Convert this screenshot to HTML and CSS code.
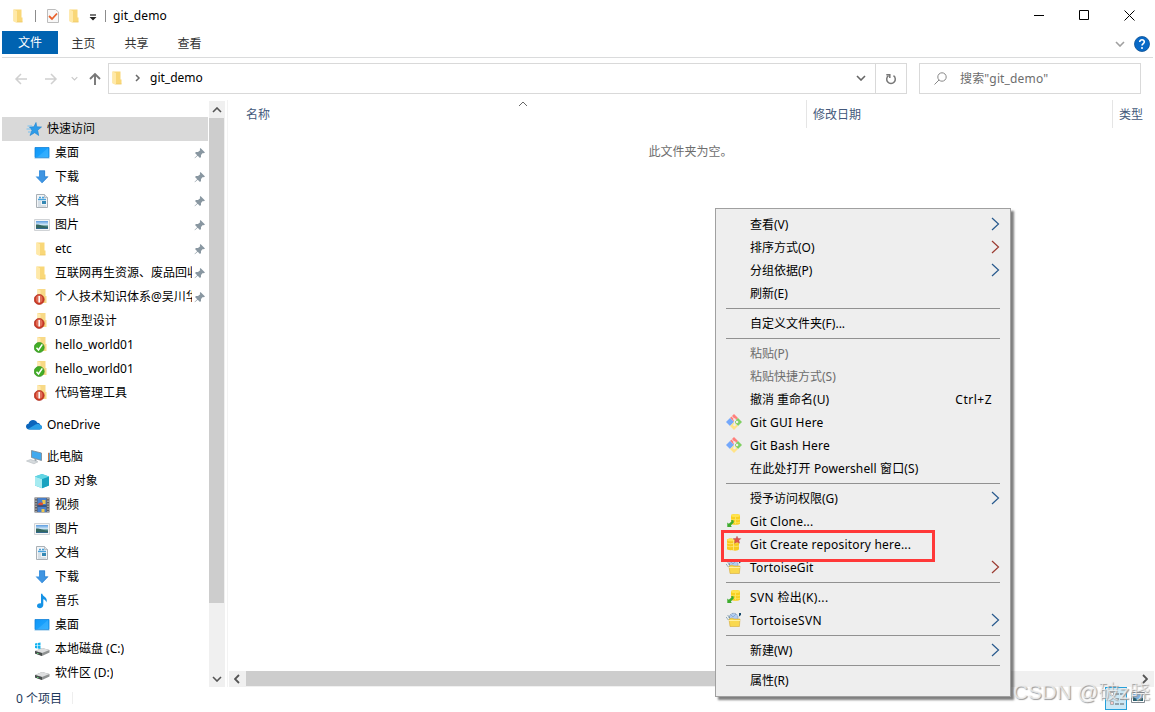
FILE: index.html
```html
<!DOCTYPE html>
<html lang="zh-CN">
<head>
<meta charset="utf-8">
<title>git_demo</title>
<link rel="stylesheet" href="styles.css">
</head>
<body>
<svg class="defs" width="0" height="0">
  <defs>
    <linearGradient id="gFold" x1="0" y1="0" x2="1" y2="1"><stop offset="0" stop-color="#ffe9a6"/><stop offset="1" stop-color="#f7cd62"/></linearGradient>
    <linearGradient id="gSky" x1="0" y1="0" x2="0" y2="1"><stop offset="0" stop-color="#5b9ce0"/><stop offset=".5" stop-color="#d8ecf8"/><stop offset=".6" stop-color="#4f8a86"/><stop offset="1" stop-color="#2d6390"/></linearGradient>
    <linearGradient id="gDesk" x1="0" y1="0" x2="1" y2="1"><stop offset="0" stop-color="#1296f6"/><stop offset=".5" stop-color="#18a0fc"/><stop offset="1" stop-color="#2bb0ff"/></linearGradient>
  </defs>
  <symbol id="folder" viewBox="0 0 16 16"><path d="M2.500 1.500h8v8h1v4.500H6l-3.500-1z" fill="#f9d778"/><path d="M2.500 1.500L6 3v12l-3.500-1.500z" fill="#ffe9a8"/><path d="M6 14h5.500" stroke="#eec764" stroke-width=".8"/></symbol>
  <symbol id="star" viewBox="0 0 16 16"><path d="M10 1.500l.8 4.300 4.700.2-3.800 3.200 1 5.300-4-2.800L4 14.500l2-5.300L3.500 6l4.400-.2z" fill="#2d9be8" stroke="#1c83d2" stroke-width=".6"/><path d="M1.500 5h4.500M.5 8h4.500M2 11h3" stroke="#75c1f2" stroke-width="1"/></symbol>
  <symbol id="desktop" viewBox="0 0 16 16"><path d="M1 2.500h14v10H1z" fill="url(#gDesk)" stroke="#1182d8" stroke-width=".8"/><path d="M3 12.500L14 3V12z" fill="#43b5ff" opacity=".5"/><path d="M.5 13.300h15" stroke="#9fcdec" stroke-width=".8"/></symbol>
  <symbol id="download" viewBox="0 0 16 16"><path d="M5 1.500h6v6h3.500L8 14.300 1.500 7.500H5z" fill="#3f95e2"/><path d="M5.300 1.800h5.400v6h3L8 13.800" fill="none" stroke="#2c80cf" stroke-width=".6"/></symbol>
  <symbol id="doc" viewBox="0 0 16 16"><path d="M2.500 1.500h8l3 3v10h-11z" fill="#f3f5f7" stroke="#a9b0b6"/><path d="M5 4.500h2M4 6.500h8M8 4.500h2" stroke="#4aa3dc" stroke-width="1.300"/><path d="M4 9h3M4 11h3M4 13h8" stroke="#a9bccb" stroke-width=".8"/><path d="M8 8h4v3H8z" fill="#3488b4"/><path d="M10.500 1.500v3h3" fill="#d8e1e8" stroke="#9aa3ab" stroke-width=".6"/></symbol>
  <symbol id="picture" viewBox="0 0 16 16"><path d="M.5 2.500h15v11H.5z" fill="#f5f5f5" stroke="#d0d3d6"/><path d="M2 4h12v8H2z" fill="url(#gSky)"/><path d="M2 7.500c3-.5 6 1.500 12 2.500v1H2z" fill="#346760"/></symbol>
  <symbol id="red" viewBox="0 0 16 16"><path d="M3.500 0h8v7h1v7h-9z" fill="#f8d986"/><path d="M3.500 0l3 1.500V12h-3z" fill="#ffeab0"/><circle cx="5.200" cy="10.500" r="5" fill="#cd3a25" stroke="#a92d1f" stroke-width=".7"/><ellipse cx="5.200" cy="10" rx="3.300" ry="3.800" fill="#df6e58"/><path d="M5.200 7v6.500" stroke="#fff" stroke-width="1.500"/></symbol>
  <symbol id="green" viewBox="0 0 16 16"><path d="M3.500 0h8v7h1v7h-9z" fill="#f8d986"/><path d="M3.500 0l3 1.500V12h-3z" fill="#ffeab0"/><circle cx="5.200" cy="10.500" r="5" fill="#42ad26" stroke="#348f20" stroke-width=".7"/><path d="M2.500 10.800l2 2.200L8.300 7.300" fill="none" stroke="#fff" stroke-width="1.500"/></symbol>
  <symbol id="cloud" viewBox="0 0 16 16"><path d="M3.500 12.500C1 12.500 0 11 0 9.500 0 8 1 7 2.500 6.800 3 4.500 5 3 7 3c2 0 3.500 1 4.200 2.800 2 0 3 1.200 3.200 2.500 1.200.3 1.600 1.200 1.600 2 0 1.300-1 2.200-2.300 2.200z" fill="#0b65bc"/><path d="M2 12l7.500-4.500c1.500-1 4-.6 5 .8 1 .4 1.500 1.200 1.500 2 0 1.300-1 2.200-2.300 2.200H3.500z" fill="#299ee6"/></symbol>
  <symbol id="pc" viewBox="0 0 16 16"><path d="M5.500 1.500l10 2.500v7.500l-10-3z" fill="#41a9ef" stroke="#7b8790" stroke-width=".8"/><path d="M9.500 10v2.500" stroke="#9ba6ae" stroke-width="2"/><path d="M.5 12l4-1.500 7.500 2.300-4 2z" fill="#d5dadd" stroke="#b5bbc0" stroke-width=".6"/></symbol>
  <symbol id="cube" viewBox="0 0 16 16"><path d="M8 1l7 2.500v9L8 15.300 1 12.500v-9z" fill="#36bdd5"/><path d="M1 3.500L8 6v9.300L1 12.500z" fill="#a6ebf1"/><path d="M8 6l7-2.500v9L8 15.300z" fill="#18a2c0"/><path d="M8 1l7 2.500L8 6 1 3.500z" fill="#62d5e3"/></symbol>
  <symbol id="video" viewBox="0 0 16 16"><path d="M.5.500h15v15H.5z" fill="#5c5c60"/><path d="M3.500 1h9v14h-9z" fill="#487fca"/><path d="M4 7.500c1-2 3-2.500 5-1.500v2c-2 1-4 .5-5-.5z" fill="#d94d36"/><path d="M8 3h3.500v4H9zM7.500 12h3v3h-3z" fill="#edc64b"/><path d="M3.500 9h9" stroke="#263340"/><path d="M2 1v14M14 1v14" stroke="#c5c5c5" stroke-width="1.300" stroke-dasharray="1.300 1.300"/></symbol>
  <symbol id="music" viewBox="0 0 16 16"><path d="M7 .8h1.300c.3 3 6.300 3.700 4 8.700-.2-2-1.700-3-3-3.300V12c0 2-1.600 3.200-3.500 3.200-1.700 0-2.800-.8-2.800-2.200C3 11.200 4.800 10 7 10.400z" fill="#1592e6"/></symbol>
  <symbol id="disk" viewBox="0 0 16 16"><path d="M1 10l7-3 7.500 2v2.500L8 15l-7-2.500z" fill="#8f9292"/><path d="M1 10l7-3 7.500 2L8 12z" fill="#dedfe0"/><path d="M1 10l7 2v3l-7-2.500z" fill="#494e4d"/><path d="M3 12.500h1.500" stroke="#62d578"/></symbol>
  <symbol id="cdisk" viewBox="0 0 16 16"><use href="#disk"/><path d="M1 2.500l2.200-.4v2.400H1zM3.800 2L6.500 1.500v3H3.800zM1 5.100h2.200v2.400L1 7.100zM3.800 5.100h2.700v3l-2.700-.5z" fill="#12b2ef"/></symbol>
  <symbol id="pin" viewBox="0 0 12 12"><path d="M6.500 1L11 5.500 9.800 6.300 8.800 6 7 8v2l-1 1L3.700 8.700.8 11.300.5 11 3.200 8.200 1 6l1-1h2l2.200-1.800L5.800 2z" fill="#8997a1"/></symbol>
  <symbol id="git" viewBox="0 0 16 16"><path d="M8 0l4 4-4 4-4-4z" fill="#ff7f7b"/><path d="M4 4l4 4-4 4-4-4z" fill="#74a8fb"/><path d="M12 4l4 4-4 4-4-4z" fill="#80cf62"/><path d="M8 8l4 4-4 4-4-4z" fill="#ffe388"/><path d="M5.500 2L11 8M8.500 5v6" stroke="#ededed" stroke-width="1" fill="none"/><circle cx="8.500" cy="5.500" r="1.200" fill="#ededed"/><circle cx="11" cy="8" r="1.300" fill="#ededed"/><circle cx="8.500" cy="11" r="1.300" fill="#ededed"/></symbol>
  <symbol id="clone" viewBox="0 0 16 16"><path d="M5 2.500c0-2 9-2 9 0v8c0 1.700-9 1.700-9 0z" fill="#f9cf20"/><ellipse cx="9.500" cy="2.500" rx="4.500" ry="1.500" fill="#ffe350"/><path d="M9.500 4v7M5 6c1 1 3 1 4.500 0 1 1 3.500 1 4.500 0M5 9c1 1 3 1 4.500 0 1 1 3.500 1 4.500 0" fill="none" stroke="#ffe766" stroke-width=".8"/><path d="M1.300 14V9.500l1.500 1.300L5.500 8.500l-.3-1.500 2.300.3.300 2.200-3 3 1 1.500z" fill="#3dac2d"/></symbol>
  <symbol id="repo" viewBox="0 0 16 16"><path d="M1 4c0-2 7-2 7 0h5v9c0 2-6 2-7 1-2 .5-5 0-5-1z" fill="#f7ca1f"/><ellipse cx="4.500" cy="4" rx="3.500" ry="1.300" fill="#ffe255"/><path d="M1 7c2 1 5 1 7 0M1 10c2 1 5 1 7 0M8 6.500c2 1 4 0 5 0M8 10c2 1 4 0 5 0M7.500 4v10" fill="none" stroke="#ffe983" stroke-width=".8"/><path d="M11 .2l1.100 2.300 2.700.1-1.900 1.900.7 2.700-2.600-1.300-2.500 1.300.5-2.700-1.800-1.900 2.700-.1z" fill="#e0554c" stroke="#b0444a" stroke-width=".4"/></symbol>
  <symbol id="tortoise" viewBox="0 0 16 16"><path d="M3.500 5c0-5 8-5 8.500 0v3H3.500z" fill="#b2cdf0" stroke="#6d86a6" stroke-width=".7" stroke-dasharray="1.500 .8"/><path d="M5 3l2 2 3-3" fill="none" stroke="#7f9fca" stroke-width=".7"/><path d="M13 1h2v2l-2 1.500z" fill="#174b6d"/><path d="M.5 5.500l1.500 2M2 3.500l1 2" stroke="#2f6680" stroke-width="1" stroke-dasharray="1 .7"/><path d="M3 7l3-1 2 1h6l-.6 7.500H4z" fill="#f9d84f" stroke="#ce9e27" stroke-width=".5"/><path d="M3 8.500h11" stroke="#fff09f"/></symbol>
  <symbol id="more" viewBox="0 0 9 14"><path d="M1 1l6.500 6L1 13" fill="none" stroke="#27598d" stroke-width="1.200"/></symbol>
  <symbol id="moreRed" viewBox="0 0 9 14"><path d="M1 1l6.500 6L1 13" fill="none" stroke="#9b3b31" stroke-width="1.200"/></symbol>
  <symbol id="down" viewBox="0 0 10 6"><path d="M1 1l4 4 4-4" fill="none" stroke="currentColor" stroke-width="1.600"/></symbol>
</svg>

<div class="window">
  <header class="titlebar">
    <svg class="i16"><use href="#folder"/></svg>
    <i class="bar bar-a"></i>
    <svg class="i16 check" viewBox="0 0 16 16"><path d="M2.500 1.500h8l3 2.500v10.500h-11z" fill="#f8f8f8" stroke="#bcbcbc"/><path d="M4 8l3 3 5-5.500" fill="none" stroke="#e9622d" stroke-width="1.800"/></svg>
    <svg class="i16 fold2"><use href="#folder"/></svg>
    <svg class="qdrop" viewBox="0 0 8 7"><path d="M1 1h6" stroke="#222" stroke-width="1.200"/><path d="M.5 3h7L4 6.500z" fill="#222"/></svg>
    <i class="bar bar-b"></i>
    <span class="title">git_demo</span>
    <div class="controls">
      <svg viewBox="0 0 11 11"><path d="M0 5.500h10" stroke="#000"/></svg>
      <svg viewBox="0 0 11 11"><path d="M.5.500h9v9h-9z" fill="none" stroke="#000"/></svg>
      <svg viewBox="0 0 11 11"><path d="M.5.500l10 10M10.500.5l-10 10" stroke="#000"/></svg>
    </div>
  </header>
  <nav class="tabs">
    <span class="tab active">文件</span><span class="tab">主页</span><span class="tab">共享</span><span class="tab">查看</span>
    <div class="help"><svg class="car light"><use href="#down"/></svg>
    <svg class="q" viewBox="0 0 16 16"><circle cx="8" cy="8" r="7.500" fill="#0869c7" stroke="#0b4f92" stroke-width=".8"/><path d="M5.700 6c0-3 4.700-2.800 4.600 0C10.300 7.500 8 7.600 8 9.500" fill="none" stroke="#fff" stroke-width="1.600"/><circle cx="8" cy="12" r="1" fill="#fff"/></svg></div>
  </nav>
  <div class="address">
    <svg class="arr" viewBox="0 0 14 14"><path d="M13 7H2M7 2L2 7l5 5" fill="none" stroke="#d0d0d0" stroke-width="1.500"/></svg>
    <svg class="arr fwd" viewBox="0 0 14 14"><path d="M1 7h11M7 2l5 5-5 5" fill="none" stroke="#d0d0d0" stroke-width="1.500"/></svg>
    <svg class="hist"><use href="#down"/></svg>
    <svg class="arr up" viewBox="0 0 14 14"><path d="M7 13V2M2 7l5-5 5 5" fill="none" stroke="#777" stroke-width="1.900"/></svg>
    <div class="path">
      <svg class="i16"><use href="#folder"/></svg>
      <svg class="crumb" viewBox="0 0 6 8"><path d="M1 1l3 3-3 3" fill="none" stroke="#6a6a6a" stroke-width="1.500"/></svg>
      <span>git_demo</span>
      <svg class="car pathcar"><use href="#down"/></svg>
      <div class="refresh"><svg viewBox="0 0 12 12"><path d="M8.500 2.700A4.300 4.300 0 1 1 3.500 2.700" fill="none" stroke="#777" stroke-width="1.500"/><path d="M1.300 1.700h3.500V5" fill="none" stroke="#777" stroke-width="1.500"/></svg></div>
    </div>
    <div class="search"><svg viewBox="0 0 13 13"><circle cx="8" cy="5" r="4.200" fill="none" stroke="#888"/><path d="M5 8L.5 12.500" stroke="#888"/></svg><span>搜索"git_demo"</span></div>
  </div>

  <main class="body">
    <aside class="side">
      <div class="tree">
        <div class="row root sel"><svg class="i16"><use href="#star"/></svg><span>快速访问</span></div>
        <div class="row"><svg class="i16"><use href="#desktop"/></svg><span>桌面</span><svg class="pin"><use href="#pin"/></svg></div>
        <div class="row"><svg class="i16"><use href="#download"/></svg><span>下载</span><svg class="pin"><use href="#pin"/></svg></div>
        <div class="row"><svg class="i16"><use href="#doc"/></svg><span>文档</span><svg class="pin"><use href="#pin"/></svg></div>
        <div class="row"><svg class="i16"><use href="#picture"/></svg><span>图片</span><svg class="pin"><use href="#pin"/></svg></div>
        <div class="row"><svg class="i16"><use href="#folder"/></svg><span>etc</span><svg class="pin"><use href="#pin"/></svg></div>
        <div class="row"><svg class="i16"><use href="#folder"/></svg><span>互联网再生资源、废品回收</span><svg class="pin"><use href="#pin"/></svg></div>
        <div class="row"><svg class="i16"><use href="#red"/></svg><span>个人技术知识体系@吴川华</span><svg class="pin"><use href="#pin"/></svg></div>
        <div class="row"><svg class="i16"><use href="#red"/></svg><span>01原型设计</span></div>
        <div class="row"><svg class="i16"><use href="#green"/></svg><span>hello_world01</span></div>
        <div class="row"><svg class="i16"><use href="#green"/></svg><span>hello_world01</span></div>
        <div class="row"><svg class="i16"><use href="#red"/></svg><span>代码管理工具</span></div>
        <div class="row root gap"><svg class="i16"><use href="#cloud"/></svg><span>OneDrive</span></div>
        <div class="row root gap"><svg class="i16"><use href="#pc"/></svg><span>此电脑</span></div>
        <div class="row"><svg class="i16"><use href="#cube"/></svg><span>3D 对象</span></div>
        <div class="row"><svg class="i16"><use href="#video"/></svg><span>视频</span></div>
        <div class="row"><svg class="i16"><use href="#picture"/></svg><span>图片</span></div>
        <div class="row"><svg class="i16"><use href="#doc"/></svg><span>文档</span></div>
        <div class="row"><svg class="i16"><use href="#download"/></svg><span>下载</span></div>
        <div class="row"><svg class="i16"><use href="#music"/></svg><span>音乐</span></div>
        <div class="row"><svg class="i16"><use href="#desktop"/></svg><span>桌面</span></div>
        <div class="row"><svg class="i16"><use href="#cdisk"/></svg><span>本地磁盘 (C:)</span></div>
        <div class="row"><svg class="i16"><use href="#disk"/></svg><span>软件区 (D:)</span></div>
      </div>
      <div class="vscroll"><svg class="sb flip"><use href="#down"/></svg><div class="vthumb"></div><svg class="sb end"><use href="#down"/></svg></div>
    </aside>
    <section class="content">
      <div class="cols"><div class="col name">名称<svg class="sort" viewBox="0 0 10 6"><path d="M1 5l4-4 4 4" fill="none" stroke="#666"/></svg></div><div class="col date">修改日期</div><div class="col type">类型</div></div>
      <div class="empty">此文件夹为空。</div>
      <div class="hscroll"><svg viewBox="0 0 6 10"><path d="M5 1L1 5l4 4" fill="none" stroke="#555" stroke-width="1.800"/></svg><div class="hthumb"></div><svg viewBox="0 0 6 10"><path d="M1 1l4 4-4 4" fill="none" stroke="#555" stroke-width="1.800"/></svg></div>
    </section>
  </main>
  <footer class="status"><span>0 个项目</span><i></i>
    <div class="views">
      <div class="view on"><svg viewBox="0 0 16 16"><path d="M2.500 1.500h3v3h-3zM2.500 10.500h3v3h-3z" fill="#fff" stroke="#999" stroke-width=".8"/><path d="M3.500 12h1" stroke="#d33"/><path d="M7 3h4M12 3h4M7 8h4M12 8h4M7 13h4M12 13h4" stroke="#556068"/></svg></div>
      <svg class="thumbs" viewBox="0 0 14 12"><path d="M.5.500h13v10H.5z" fill="#fff" stroke="#808890"/><path d="M2 2h10v7H2z" fill="#7fb0e0"/><path d="M2 5l4 2 6-1v3H2z" fill="#2b5e6b"/></svg>
    </div>
  </footer>
</div>

<div class="menu">
  <div class="item"><span>查看(V)</span><svg class="more"><use href="#more"/></svg></div>
  <div class="item"><span>排序方式(O)</span><svg class="more"><use href="#moreRed"/></svg></div>
  <div class="item"><span>分组依据(P)</span><svg class="more"><use href="#more"/></svg></div>
  <div class="item"><span>刷新(E)</span></div>
  <hr>
  <div class="item"><span>自定义文件夹(F)...</span></div>
  <hr>
  <div class="item off"><span>粘贴(P)</span></div>
  <div class="item off"><span>粘贴快捷方式(S)</span></div>
  <div class="item"><span>撤消 重命名(U)</span><span class="key">Ctrl+Z</span></div>
  <div class="item en"><svg class="i16"><use href="#git"/></svg><span>Git GUI Here</span></div>
  <div class="item en"><svg class="i16"><use href="#git"/></svg><span>Git Bash Here</span></div>
  <div class="item ps"><span>在此处打开 Powershell 窗口(S)</span></div>
  <hr>
  <div class="item"><span>授予访问权限(G)</span><svg class="more"><use href="#more"/></svg></div>
  <div class="item en"><svg class="i16"><use href="#clone"/></svg><span>Git Clone...</span></div>
  <div class="item en marked"><svg class="i16"><use href="#repo"/></svg><span>Git Create repository here...</span></div>
  <div class="item en"><svg class="i16"><use href="#tortoise"/></svg><span>TortoiseGit</span><svg class="more"><use href="#moreRed"/></svg></div>
  <hr>
  <div class="item svn"><svg class="i16"><use href="#clone"/></svg><span>SVN 检出(K)...</span></div>
  <div class="item svn"><svg class="i16"><use href="#tortoise"/></svg><span>TortoiseSVN</span><svg class="more"><use href="#more"/></svg></div>
  <hr>
  <div class="item"><span>新建(W)</span><svg class="more"><use href="#more"/></svg></div>
  <hr>
  <div class="item"><span>属性(R)</span></div>
</div>
<div class="watermark">CSDN @破z晓</div>
</body>
</html>
```
FILE: styles.css
```css
*, *::after { box-sizing: border-box; }
body { margin: 0; width: 1155px; height: 712px; overflow: hidden; position: relative; background: #fff; color: #000; font: 12px/16px "Noto Sans", "Noto Sans CJK SC", sans-serif; }
svg { display: block; flex: none; }
.defs { position: absolute; }
.i16 { width: 16px; height: 16px; }
.window { display: flex; flex-direction: column; width: 1155px; height: 712px; }

.titlebar { height: 31px; display: flex; align-items: center; padding-left: 11px; }
.bar { width: 1px; height: 12px; background: #8c8c8c; }
.bar-a { margin-left: 8px; }
.check { margin-left: 9px; }
.fold2 { margin-left: 6px; }
.qdrop { width: 8px; height: 7px; margin: 3px 0 0 6px; }
.bar-b { margin-left: 8px; }
.title { margin-left: 7px; letter-spacing: .15px; }
.controls { margin-left: auto; display: flex; gap: 34px; padding-right: 20px; }
.controls svg { width: 11px; height: 11px; }

.tabs { height: 27px; margin: 0 2px; display: flex; border-bottom: 1px solid #dadbdc; color: #333; }
.tab { width: 53px; height: 23px; line-height: 24px; padding-top: 1px; text-align: center; }
.tab.active { width: 56px; background: #0063b1; color: #fff; padding-top: 0; }
.tab:not(.active) { transform: translateX(-1px); }
.help { margin-left: auto; display: flex; align-items: center; gap: 9px; padding-right: 3px; height: 26px; }
.car { width: 10px; height: 6px; color: #666; }
.light { color: #a0a0a0; }
.q { width: 16px; height: 16px; }

.address { height: 42px; display: flex; align-items: flex-start; padding: 5px 0 0 14px; }
.arr { width: 14px; height: 14px; margin-top: 9px; }
.fwd { margin-left: 16px; }
.hist { width: 7px; height: 5px; margin: 13px 0 0 13px; color: #c8c8c8; }
.up { margin-left: 10px; }
.path { width: 799px; height: 31px; margin-left: 6px; border: 1px solid #d9d9d9; display: flex; align-items: center; padding: 0 0 1px 1px; }
.crumb { width: 6px; height: 8px; margin: 0 9px 0 9px; }
.pathcar { margin-left: auto; margin-right: 9px; }
.refresh { width: 31px; height: 29px; margin-bottom: -1px; border-left: 1px solid #d9d9d9; display: grid; place-items: center; }
.refresh svg { width: 12px; height: 12px; }
.search { width: 222px; height: 31px; margin-left: 12px; border: 1px solid #d9d9d9; display: flex; align-items: center; gap: 13px; padding-left: 14px; color: #6d6d6d; letter-spacing: .15px; }
.search svg { width: 13px; height: 13px; }

.body { height: 587px; display: flex; }
.side { width: 228px; display: flex; border-right: 1px solid #f3f3f3; }
.tree { width: 209px; padding: 17px 1px 0 2px; }
.row { height: 24px; display: flex; align-items: center; padding-left: 32px; line-height: 20px; }
.row > .i16 { margin-left: -.5px; }
.row > span { margin-left: 5.5px; white-space: nowrap; overflow: hidden; max-width: 137px; }
.row.root { padding-left: 24px; }
.row.gap { margin-top: 8px; }
.sel { background: #d9d9d9; }
.pin { width: 12px; height: 12px; margin-left: auto; margin-right: 2px; }
.vscroll { width: 16px; height: 586px; margin-top: 1px; background: #f0f0f0; display: flex; flex-direction: column; align-items: flex-start; }
.sb { width: 10px; height: 6px; margin: 6px 0 5px 3px; color: #555; }
.flip { transform: scaleY(-1); }
.vthumb { width: 15px; height: 485px; background: #cdcdcd; }
.end { margin-top: auto; }
.content { width: 925px; margin-left: 1px; display: flex; flex-direction: column; }
.cols { height: 28px; display: flex; color: #44597b; line-height: 30px; }
.name { width: 577px; padding-left: 17px; position: relative; }
.sort { position: absolute; left: 289px; top: 1px; width: 10px; height: 6px; }
.date { width: 306px; padding-left: 6px; border-left: 1px solid #e5e5e5; }
.type { padding-left: 6px; border-left: 1px solid #e5e5e5; }
.empty { margin: 16px 0 0 -2px; text-align: center; color: #6d6d6d; }
.hscroll { height: 16px; margin-top: auto; background: #f0f0f0; display: flex; align-items: center; padding: 0 6px 0 5px; }
.hscroll svg { width: 6px; height: 10px; }
.hthumb { width: 640px; height: 15px; margin: 0 auto 1px 6px; background: #cdcdcd; }
.status { height: 25px; display: flex; padding: 4px 0 0 16px; color: #1e395b; }
.status i { width: 1px; height: 12px; margin: 1px 0 0 10px; background: #eee; }
.views { margin: -4px 10px 0 auto; display: flex; gap: 4px; }
.view { width: 22px; height: 23px; padding: 3px 2px; }
.view.on { background: #cce8f5; border: 1px solid #26a0da; }
.view svg { width: 16px; height: 16px; }
.thumbs { width: 14px; height: 12px; margin-top: 5px; }

.menu { position: absolute; left: 715px; top: 208px; width: 296px; height: 489px; padding: 4px 10px; background: #eee; border: 1px solid #a0a0a0; box-shadow: 3px 3px 2px rgba(0,0,0,.5); }
.item { height: 23px; display: grid; grid-template-columns: 24px 1fr auto; align-items: center; position: relative; }
.item > * { grid-row: 1; }
.item span { grid-column: 2; white-space: nowrap; }
.item .i16 { grid-column: 1; margin-top: -2px; }
.item .key { grid-column: 3; margin-right: 8px; letter-spacing: .5px; }
.more { grid-column: 3; width: 9px; height: 14px; margin-top: -2px; }
.en span { letter-spacing: .2px; }
.ps span { letter-spacing: .13px; }
.svn span { letter-spacing: .35px; }
.off { color: #6d6d6d; }
.menu hr { margin: 3px 0; border: 0; height: 1px; background: #919191; }
.marked::after { content: ""; position: absolute; z-index: 1; left: -5px; top: -3px; width: 214px; height: 32px; border: 3px solid #ff3838; }
.watermark { position: absolute; left: 1013px; top: 678px; font: 20.7px/28px "Liberation Sans", "Noto Sans CJK SC", sans-serif; font-weight: 300; color: rgba(240,240,240,.8); text-shadow: 1px 1px 1px #999; white-space: nowrap; }
```
